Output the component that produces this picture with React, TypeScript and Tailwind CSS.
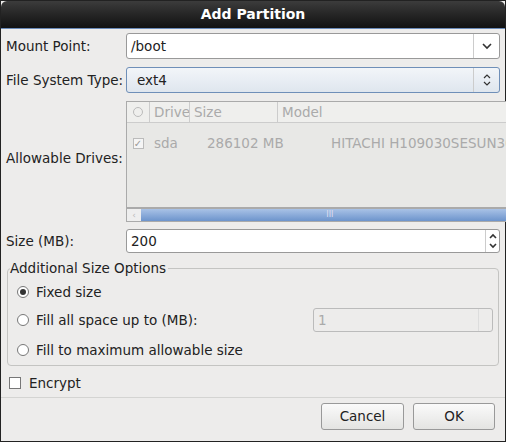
import React from "react";

const Chev = ({ d }: { d: string }) => (
  <svg width="10" height="8" viewBox="0 0 10 8"><path d={d} fill="none" stroke="#333" strokeWidth="1.6" /></svg>
);

const Radio = ({ on }: { on?: boolean }) => (
  <span className="w-[12px] h-[12px] shrink-0 rounded-full border border-[#777] bg-white flex items-center justify-center">
    {on && <span className="w-[6px] h-[6px] rounded-full bg-[#333]" />}
  </span>
);

export default function App() {
  return (
    <div className="w-[506px] h-[442px] bg-[#edeceb] border border-[#222] flex flex-col text-[13.5px] text-[#222]" style={{ fontFamily: "'DejaVu Sans', sans-serif" }}>
      <div className="h-[28px] shrink-0 bg-gradient-to-b from-[#3c3c3c] to-[#111] text-white font-bold text-[14px] flex items-center justify-center rounded-t-[6px] border-b border-[#6a8ab8]">Add Partition</div>
      <div className="flex flex-col px-[5px] pt-[4px]">
        <div className="flex items-center h-[26px] mt-[0px]">
          <span className="w-[120px] shrink-0 whitespace-nowrap">Mount Point:</span>
          <div className="flex-1 h-[26px] bg-white border border-[#999] rounded-[3px] flex items-center">
            <span className="flex-1 pl-[4px]">/boot</span>
            <span className="w-[26px] h-full border-l border-[#ccc] flex items-center justify-center"><Chev d="M1 2 L5 6 L9 2" /></span>
          </div>
        </div>
        <div className="flex items-center h-[26px] mt-[8px]">
          <span className="w-[120px] shrink-0 whitespace-nowrap">File System Type:</span>
          <div className="flex-1 h-[26px] bg-gradient-to-b from-[#f2f5f9] to-[#dfe6ee] border border-[#6f8fb8] rounded-[3px] flex items-center">
            <span className="flex-1 pl-[10px]">ext4</span>
            <span className="w-[26px] h-full border-l border-[#ccc] flex flex-col items-center justify-center">
              <svg width="8" height="12" viewBox="0 0 8 12"><path d="M1 4 L4 1 L7 4 M1 8 L4 11 L7 8" fill="none" stroke="#333" strokeWidth="1.2" /></svg>
            </span>
          </div>
        </div>
        <div className="flex mt-[8px]">
          <span className="w-[120px] shrink-0 whitespace-nowrap flex items-center pb-[6px]">Allowable Drives:</span>
          <div className="flex-1 flex flex-col">
            <div className="h-[107px] border border-[#aaa] bg-[#e8e8e6] text-[#aaa]">
              <div className="h-[21px] flex items-center border-b border-[#ccc] bg-[#efefed]">
                <span className="w-[22px] flex justify-center"><span className="w-[10px] h-[10px] rounded-full border border-[#bbb]" /></span>
                <span className="border-l border-[#ccc] pl-[4px] w-[40px]">Drive</span>
                <span className="border-l border-[#ccc] pl-[4px] w-[88px]">Size</span>
                <span className="border-l border-[#ccc] pl-[4px]">Model</span>
              </div>
              <div className="h-[40px] flex items-center whitespace-nowrap overflow-hidden">
                <span className="w-[22px] shrink-0 flex justify-center"><span className="w-[11px] h-[11px] border border-[#bbb] bg-[#f5f5f5] text-[10px] leading-[10px] text-center text-[#999]">✓</span></span>
                <span className="pl-[5px] w-[42px] shrink-0">sda</span>
                <span className="pl-[16px] w-[140px] shrink-0">286102 MB</span>
                <span>HITACHI H109030SESUN300G</span>
              </div>
            </div>
            <div className="h-[14px] flex border border-[#aaa] bg-[#ddd]">
              <span className="w-[14px] text-[9px] leading-[12px] text-center text-[#bbb] bg-[#eee]">‹</span>
              <span className="flex-1 bg-gradient-to-b from-[#a9c2e6] to-[#6d94cc] text-[8px] leading-[12px] text-center text-[#dde]">III</span>
              <span className="w-[14px] text-[11px] leading-[12px] text-center text-[#333] bg-[#f4f4f4]">›</span>
            </div>
          </div>
        </div>
        <div className="flex items-center h-[24px] mt-[7px]">
          <span className="w-[120px] shrink-0">Size (MB):</span>
          <div className="flex-1 h-[24px] bg-white border border-[#999] rounded-[3px] flex items-center">
            <span className="flex-1 pl-[4px]">200</span>
            <span className="w-[14px] h-full border-l border-[#ccc] flex flex-col items-center justify-center gap-[2px]">
              <Chev d="M2 6 L5 3 L8 6" /><Chev d="M2 2 L5 5 L8 2" />
            </span>
          </div>
        </div>
        <div className="relative mt-[15px] h-[98px] border border-[#c4c4c2] rounded-[4px] ml-[1px] mr-[1px] flex flex-col pl-[9px] pt-[14px]">
          <span className="absolute -top-[9px] left-[2px] bg-[#edeceb] pr-[2px] leading-[16px]">Additional Size Options</span>
          <div className="flex items-center gap-[7px] h-[18px]"><Radio on />Fixed size</div>
          <div className="flex items-center gap-[7px] h-[24px] mt-[7px]">
            <Radio />
            <span className="flex-1">Fill all space up to (MB):</span>
            <div className="w-[180px] mr-[5px] h-[24px] border border-[#bbb] rounded-[3px] flex items-center text-[#aaa]">
              <span className="flex-1 pl-[4px]">1</span>
              <span className="w-[14px] h-full border-l border-[#ddd]" />
            </div>
          </div>
          <div className="flex items-center gap-[7px] h-[18px] mt-[9px]"><Radio />Fill to maximum allowable size</div>
        </div>
        <div className="flex items-center gap-[8px] h-[18px] mt-[8px] pl-[3px]">
          <span className="w-[12px] h-[12px] border border-[#777] bg-white" />Encrypt
        </div>
        <div className="border-t border-[#d4d4d2] mt-[5px] -mx-[5px]" />
        <div className="flex justify-end gap-[9px] mt-[5px] pr-[5px]">
          <button className="w-[83px] h-[27px] border border-[#999] rounded-[3px] bg-gradient-to-b from-[#fafafa] to-[#e4e4e2]">Cancel</button>
          <button className="w-[82px] h-[27px] border border-[#999] rounded-[3px] bg-gradient-to-b from-[#fafafa] to-[#e4e4e2]">OK</button>
        </div>
      </div>
    </div>
  );
}
